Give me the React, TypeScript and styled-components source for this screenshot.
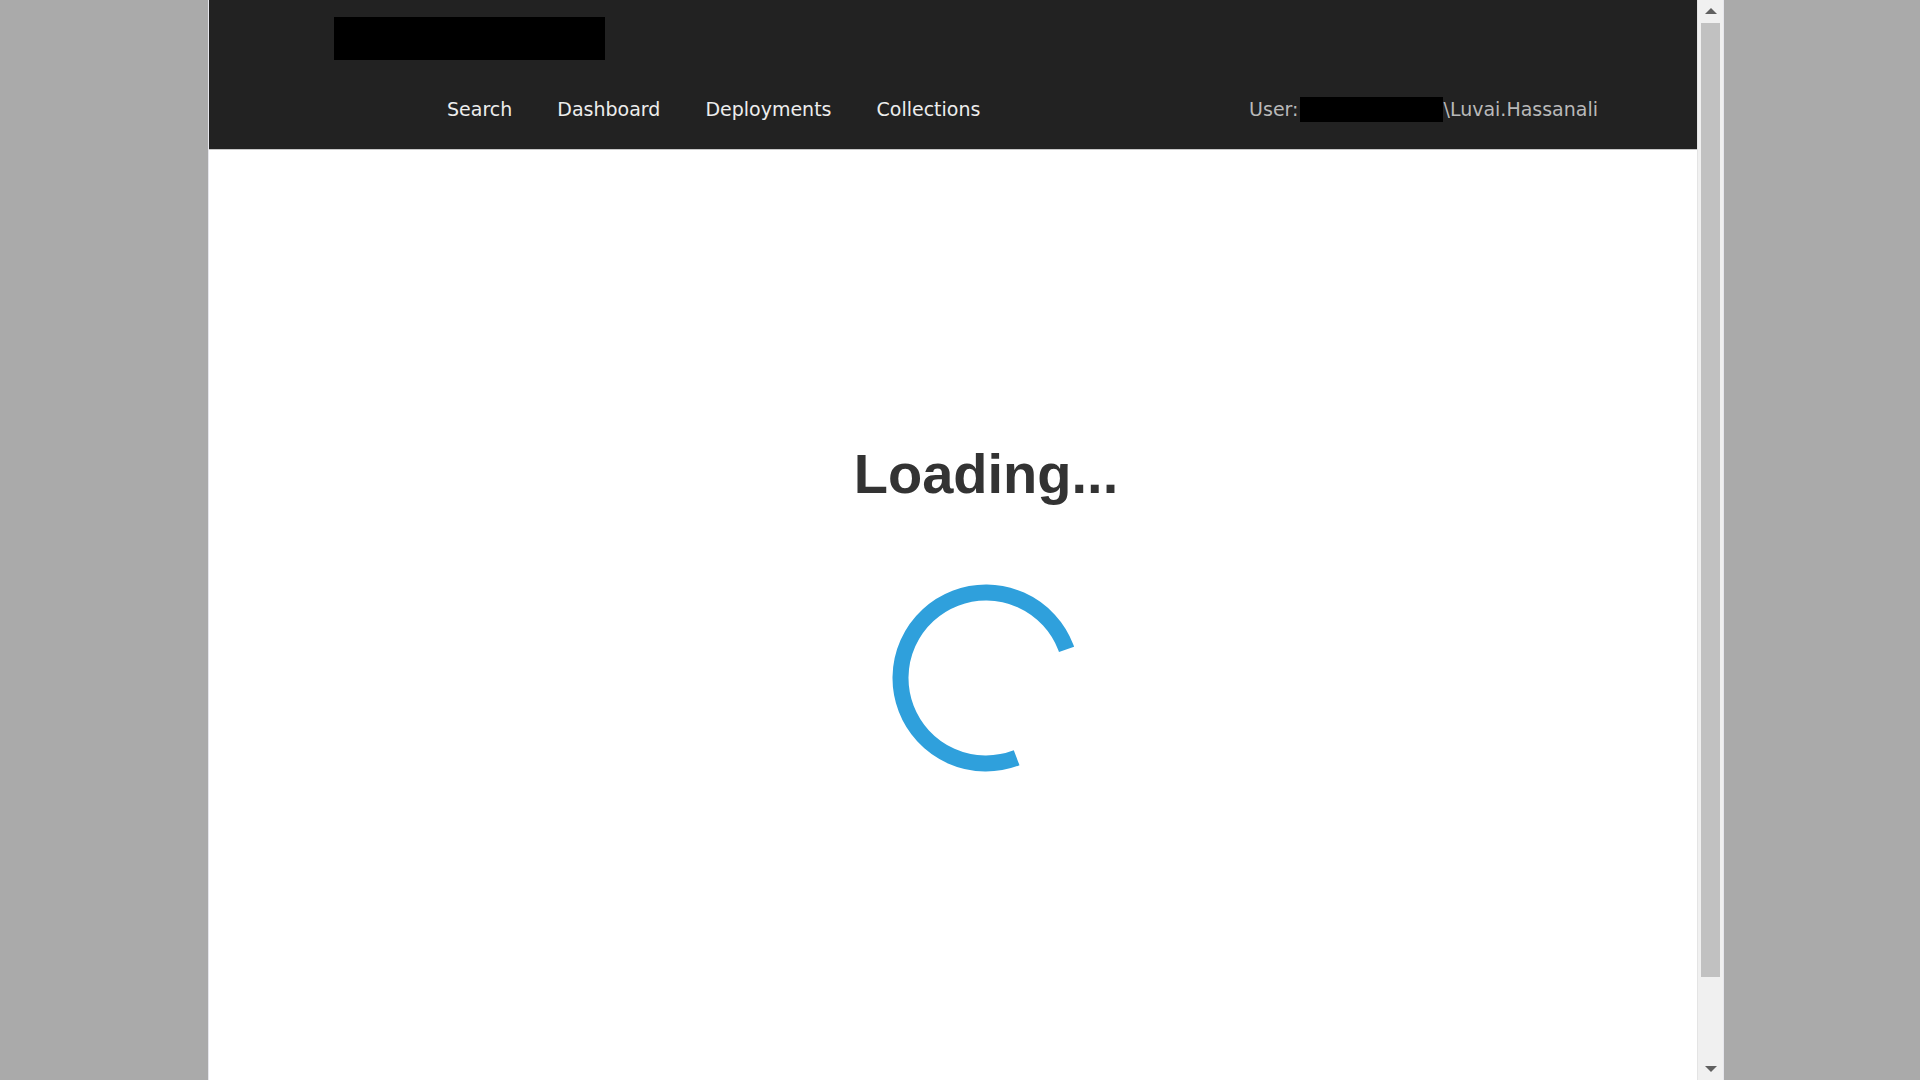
import React from "react";
import styled, { createGlobalStyle } from "styled-components";

const GlobalStyle = createGlobalStyle`
  html, body {
    margin: 0;
    padding: 0;
    background: #aaaaaa;
  }
  * {
    box-sizing: border-box;
  }
`;

const navLinks = ["Search", "Dashboard", "Deployments", "Collections"];

const App = () => {
  return (
    <Page>
      <GlobalStyle />
      <Frame>
        <Content>
          <Header>
            <Logo />
            <NavRow>
              <NavList>
                {navLinks.map((link) => (
                  <NavLink key={link}>{link}</NavLink>
                ))}
              </NavList>
              <UserInfo>
                User:
                <Redacted />
                \Luvai.Hassanali
              </UserInfo>
            </NavRow>
          </Header>
          <Main>
            <Heading>Loading...</Heading>
            <Spinner width="200" height="200" viewBox="0 0 200 200">
              <circle
                cx="100"
                cy="100"
                r="85.5"
                fill="none"
                stroke="#2fa0dc"
                strokeWidth="16"
                strokeDasharray="404.4 132.8"
                transform="rotate(69 100 100)"
              />
            </Spinner>
          </Main>
        </Content>
        <ScrollBar>
          <Arrow direction="up" />
          <Track>
            <Thumb />
          </Track>
          <Arrow direction="down" />
        </ScrollBar>
      </Frame>
    </Page>
  );
};

export default App;

const Page = styled.div`
  width: 1920px;
  height: 1080px;
  padding-left: 208px;
  background: #aaaaaa;
  overflow: hidden;
`;
const Frame = styled.div`
  width: 1516px;
  height: 1080px;
  display: flex;
  flex-direction: row;
  border-left: 1px solid #e6e6ec;
  border-right: 1px solid #e6e6ec;
  background: #ffffff;
`;
const Content = styled.div`
  flex: 1;
  display: flex;
  flex-direction: column;
`;
const Header = styled.div`
  height: 150px;
  background: #222222;
  border-bottom: 1px solid #c8c8c8;
  padding-top: 17px;
  display: flex;
  flex-direction: column;
`;
const Logo = styled.div`
  width: 271px;
  height: 43px;
  margin-left: 125px;
  background: #000000;
`;
const NavRow = styled.div`
  display: flex;
  flex-direction: row;
  align-items: center;
  justify-content: space-between;
  height: 26px;
  margin-top: 36px;
  padding-left: 238px;
  padding-right: 99px;
`;
const NavList = styled.div`
  display: flex;
  flex-direction: row;
  gap: 45px;
`;
const NavLink = styled.a`
  font-family: "DejaVu Sans", sans-serif;
  font-size: 19px;
  color: #ededed;
  cursor: pointer;
`;
const UserInfo = styled.div`
  display: flex;
  flex-direction: row;
  align-items: center;
  font-family: "DejaVu Sans", sans-serif;
  font-size: 19px;
  color: #b9b9b9;
`;
const Redacted = styled.span`
  display: inline-block;
  width: 143px;
  height: 25px;
  margin-left: 2px;
  background: #000000;
`;
const Main = styled.div`
  flex: 1;
  display: flex;
  flex-direction: column;
  align-items: center;
  padding-top: 296px;
  padding-left: 66px;
`;
const Heading = styled.h1`
  margin: 0;
  font-family: "Liberation Sans", Arial, sans-serif;
  font-weight: 700;
  font-size: 56px;
  line-height: 56px;
  color: #333333;
`;
const Spinner = styled.svg`
  margin-top: 76px;
  display: block;
`;
const ScrollBar = styled.div`
  width: 26px;
  display: flex;
  flex-direction: column;
  align-items: center;
  background: #f0f0f0;
  border-left: 1px solid #e4e4e4;
`;
const Arrow = styled.div<{ direction: "up" | "down" }>`
  width: 0;
  height: 0;
  margin: ${(p) => (p.direction === "up" ? "8px 0 7px" : "7px 0 8px")};
  border-left: 6px solid transparent;
  border-right: 6px solid transparent;
  ${(p) =>
    p.direction === "up"
      ? "border-bottom: 6px solid #606060;"
      : "border-top: 6px solid #606060;"}
`;
const Track = styled.div`
  flex: 1;
  width: 100%;
  padding: 2px 3px 0;
`;
const Thumb = styled.div`
  height: 954px;
  background: #c1c1c1;
`;
